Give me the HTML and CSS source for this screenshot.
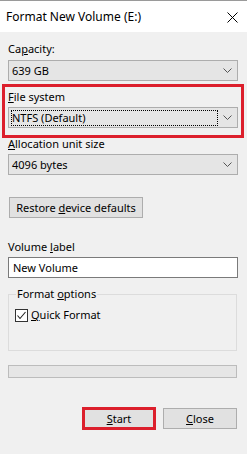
FILE: index.html
```html
<!DOCTYPE html>
<html>
<head>
<meta charset="utf-8">
<link rel="stylesheet" href="styles.css">
</head>
<body>
<div class="window">
  <div class="titlebar">
    <span class="title">Format New Volume (E:)</span>
    <svg class="close-x" width="11" height="11" viewBox="0 0 11 11"><path d="M0.5 0.5 L10.5 10.5 M10.5 0.5 L0.5 10.5" stroke="#000" stroke-width="1" fill="none"/></svg>
  </div>
  <div class="content">
    <div class="label">Ca<u>p</u>acity:</div>
    <div class="select">
      <span class="select-text">639 GB</span>
      <svg class="chev" width="9" height="5" viewBox="0 0 9 5"><polyline points="0.5,0.5 4.5,4.5 8.5,0.5" fill="none" stroke="#555" stroke-width="1"/></svg>
    </div>
    <div class="label gap8"><u>F</u>ile system</div>
    <div class="select focused">
      <span class="focus-ring"><span class="select-text">NTFS (Default)</span></span>
      <svg class="chev" width="9" height="5" viewBox="0 0 9 5"><polyline points="0.5,0.5 4.5,4.5 8.5,0.5" fill="none" stroke="#555" stroke-width="1"/></svg>
    </div>
    <div class="label gap8"><u>A</u>llocation unit size</div>
    <div class="select">
      <span class="select-text">4096 bytes</span>
      <svg class="chev" width="9" height="5" viewBox="0 0 9 5"><polyline points="0.5,0.5 4.5,4.5 8.5,0.5" fill="none" stroke="#555" stroke-width="1"/></svg>
    </div>
    <div class="btn restore"><span>Restore <u>d</u>evice defaults</span></div>
    <div class="label vol">Volume <u>l</u>abel</div>
    <div class="input">New Volume</div>
    <fieldset class="group">
      <legend>Format <u>o</u>ptions</legend>
      <div class="check-row">
        <span class="checkbox"><svg width="11" height="11" viewBox="0 0 11 11"><polyline points="1.5,5.5 4,8.5 9.5,2" fill="none" stroke="#222" stroke-width="1.1"/></svg></span>
        <span><u>Q</u>uick Format</span>
      </div>
    </fieldset>
    <div class="progress"></div>
    <div class="buttons">
      <div class="btn action start"><span><u>S</u>tart</span></div>
      <div class="btn action"><span><u>C</u>lose</span></div>
    </div>
  </div>
  <div class="mark mark-fs"></div>
  <div class="mark mark-start"></div>
</div>
</body>
</html>
```
FILE: styles.css
```css
* { box-sizing: border-box; }
html, body { margin: 0; padding: 0; }
body {
  width: 247px;
  height: 454px;
  background: #f0f0f0;
  font-family: "Noto Sans", "Open Sans", sans-serif;
  font-size: 11px;
  color: #000;
  overflow: hidden;
}
u { text-decoration: underline; text-underline-offset: 1px; }
.window { position: relative; width: 247px; height: 454px; }
.titlebar {
  height: 32px;
  background: #fff;
  border-top: 1px solid #9a9a9a;
  display: flex;
  align-items: center;
  justify-content: space-between;
  padding: 0 9px 0 6px;
  font-size: 12px;
}
.title { line-height: 16px; }
.close-x { display: block; margin-top: 1px; }
.content { padding: 9px 9px 0 8px; display: flex; flex-direction: column; }
.label { height: 16px; line-height: 16px; }
.gap8 { margin-top: 8px; }
.select {
  margin-top: 3px;
  height: 21px;
  background: #e5e5e5;
  border: 1px solid #adadad;
  display: flex;
  align-items: center;
  justify-content: space-between;
  padding: 0 5px 0 3px;
}
.gap8 + .select { margin-top: 2px; }
.select-text { line-height: 16px; }
.chev { display: block; }
.focus-ring {
  flex: 0 0 207px;
  height: 16px;
  border: 1px dotted #000;
  display: flex;
  align-items: center;
  margin-left: -1px;
}
.btn {
  background: #e1e1e1;
  border: 1px solid #adadad;
  height: 21px;
  display: flex;
  align-items: center;
  justify-content: center;
  line-height: 16px;
}
.restore { margin-top: 22px; margin-left: 1px; width: 134px; }
.vol { margin-top: 21px; }
.input {
  margin-top: 2px;
  height: 21px;
  background: #fff;
  border: 1px solid #7a7a7a;
  padding: 0 4px;
  line-height: 19px;
}
.group {
  margin: 8px 1px 0 0;
  padding: 0 6px;
  border: 1px solid #dcdcdc;
  height: 65px;
}
legend { padding: 0 1px; margin-left: 1px; line-height: 16px; }
.check-row { display: flex; align-items: center; gap: 3px; margin-top: 5px; line-height: 16px; }
.checkbox {
  width: 13px; height: 13px;
  background: #fff;
  border: 1px solid #333;
  display: flex; align-items: center; justify-content: center;
}
.checkbox svg { display: block; }
.progress {
  margin-top: 14px;
  margin-right: 1px;
  height: 13px;
  background: #e6e6e6;
  border: 1px solid #bcbcbc;
}
.buttons { margin-top: 30px; display: flex; justify-content: flex-end; gap: 7px; padding-right: 1px; }
.action { width: 74px; }
.start { border-color: #0078d7; }
.mark { position: absolute; border: 3px solid #dc1f2c; }
.mark-fs { left: 2px; top: 84px; width: 242px; height: 54px; }
.mark-start { left: 82px; top: 407px; width: 74px; height: 23px; }
```
